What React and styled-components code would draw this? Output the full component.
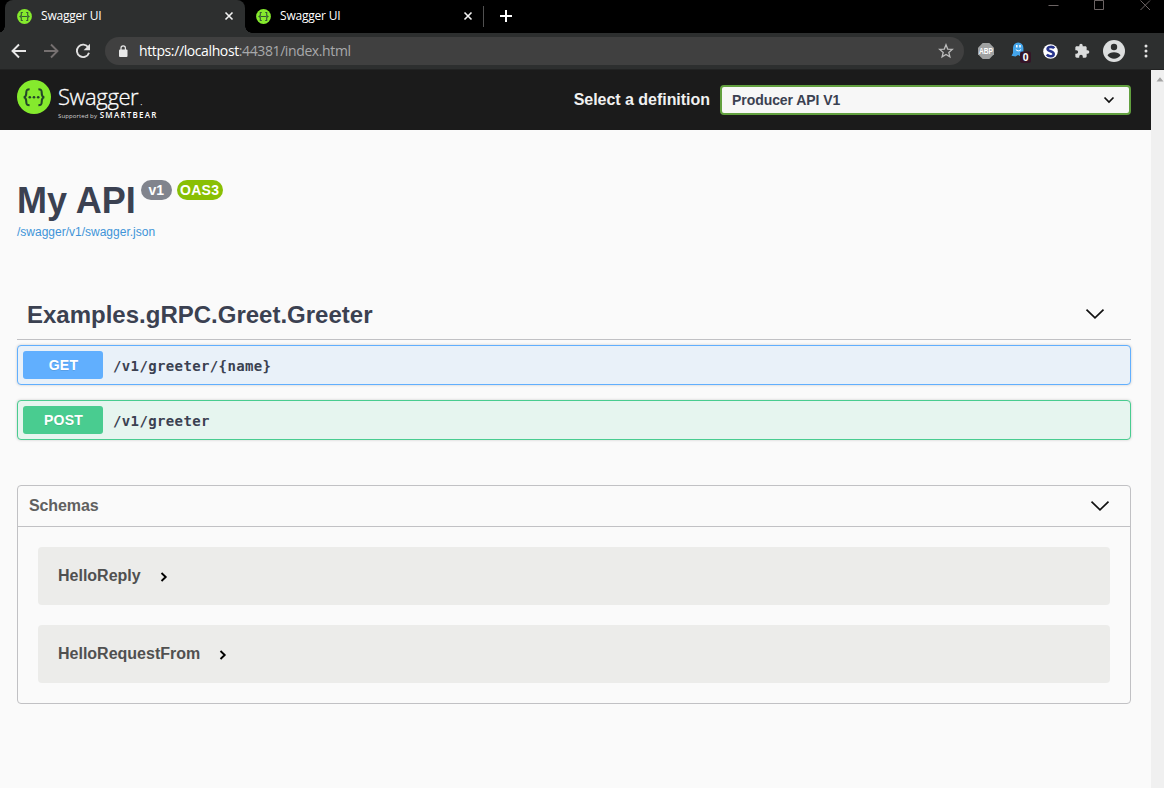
import React from "react";
import styled, { createGlobalStyle } from "styled-components";

const GlobalStyle = createGlobalStyle`
  * { box-sizing: border-box; }
  body { margin: 0; background: #fafafa; overflow: hidden; }
`;

const Window = styled.div`
  width: 1164px;
  height: 788px;
  display: flex;
  flex-direction: column;
  overflow: hidden;
  font-family: "Liberation Sans", Arial, sans-serif;
  color: #3b4151;
  svg { display: block; flex: none; }
`;

const TabStrip = styled.div`
  height: 33px;
  flex: none;
  display: flex;
  background: #000;
  padding-left: 5px;
`;

const Tab = styled.div`
  position: relative;
  width: ${(p) => p.$width}px;
  height: 33px;
  display: flex;
  align-items: center;
  padding: 0 ${(p) => (p.$active ? "11px 1px 12px" : "10px 1px 11px")};
  background: ${(p) => (p.$active ? "#2d2f2f" : "#000")};
  border-radius: 8px 8px 0 0;

  &::before,
  &::after {
    content: "";
    display: ${(p) => (p.$active ? "block" : "none")};
    position: absolute;
    bottom: 0;
    width: 7px;
    height: 7px;
  }
  &::before {
    right: 100%;
    background: radial-gradient(circle at 0 0, #000 6.500px, #2d2f2f 7px);
  }
  &::after {
    left: 100%;
    background: radial-gradient(circle at 100% 0, #000 6.500px, #2d2f2f 7px);
    z-index: 1;
  }
`;

const TabTitle = styled.span`
  flex: 1;
  margin-left: 9px;
  font: 12px/16px "Open Sans", "Noto Sans", sans-serif;
  letter-spacing: -0.2px;
  color: #fff;
`;

const TabDivider = styled.div`
  width: 1px;
  height: 21px;
  margin: 6px 15px 0 0;
  background: #505050;
`;

const NewTab = styled.div`
  padding-top: 9px;
`;

const WindowControls = styled.div`
  margin-left: auto;
  display: flex;
  gap: 35px;
  padding-right: 13px;
`;

const Toolbar = styled.div`
  height: 37px;
  flex: none;
  display: flex;
  align-items: center;
  background: #2d2f2f;
  border-bottom: 1px solid #222323;
  padding-left: 11px;
`;

const NavButtons = styled.div`
  width: 94px;
  display: flex;
  gap: 16px;
`;

const AddressBar = styled.div`
  width: 859px;
  height: 28px;
  display: flex;
  align-items: center;
  padding: 0 10px 0 12px;
  border-radius: 14px;
  background: #404040;
`;

const Url = styled.span`
  flex: 1;
  margin-left: 10px;
  font: 14px/20px "Open Sans", "Noto Sans", sans-serif;
  letter-spacing: -0.39px;
  color: #a8a9ab;
  b { font-weight: 400; color: #fff; }
`;

const Extensions = styled.div`
  display: grid;
  grid-template-columns: repeat(6, 32px);
  align-items: center;
  justify-items: center;
  padding-left: 6px;
`;

const Viewport = styled.div`
  flex: 1;
  min-height: 0;
  display: flex;
`;

const Page = styled.main`
  width: 1151px;
  background: #fafafa;
`;

const Scrollbar = styled.div`
  width: 13px;
  background: #f0f0f0;
  padding: 7px 0 0 5px;
`;

const Topbar = styled.header`
  height: 60px;
  display: flex;
  align-items: center;
  background: #1b1b1b;
  padding: 0 20px 0 17px;
`;

const Brand = styled.div`
  display: flex;
  gap: 7px;
  height: 50px;
  padding-top: 5px;
  flex: 1;
`;

const BrandText = styled.div`
  color: #fff;
  font-family: "Open Sans", sans-serif;
`;

const BrandName = styled.div`
  height: 29px;
  font-size: 22px;
  font-weight: 300;
  line-height: 26px;
  letter-spacing: -0.4px;
  padding-top: 3px;
  -webkit-text-stroke: 0.3px #fff;
  small { font-size: 9px; letter-spacing: 0; color: #999; margin-left: 2px; }
`;

const BrandNote = styled.div`
  font-size: 6px;
  line-height: 8px;
  margin-top: 2px;
  letter-spacing: 0.1px;
  white-space: nowrap;
  color: #d5d5d5;
  b { font-size: 8px; font-weight: 600; letter-spacing: 1.25px; color: #fff; margin-left: 1px; }
`;

const DefinitionLabel = styled.span`
  font-size: 16px;
  font-weight: 700;
  letter-spacing: -0.03px;
  color: #f0f0f0;
  margin-right: 10px;
`;

const DefinitionSelect = styled.div`
  width: 411px;
  height: 30px;
  display: flex;
  align-items: center;
  justify-content: space-between;
  padding: 0 14px 0 10px;
  border: 2px solid #62a03f;
  border-radius: 4px;
  background: #f7f7f7;
  font-size: 14px;
  font-weight: 700;
  letter-spacing: -0.06px;
`;

const Content = styled.div`
  padding: 49px 20px 0 17px;
`;

const TitleRow = styled.div`
  display: flex;
  height: 42px;
`;

const Title = styled.h1`
  margin: 0 5px 0 0;
  padding-top: 1px;
  font-size: 36px;
  line-height: 42px;
`;

const Badge = styled.span`
  width: ${(p) => p.$width}px;
  height: 20px;
  margin: 1px 5px 0 0;
  border-radius: 10px;
  background: ${(p) => p.$color};
  color: #fff;
  font-size: 14px;
  font-weight: 700;
  line-height: 20px;
  letter-spacing: ${(p) => p.$spacing || 0}px;
  text-align: center;
`;

const SpecLink = styled.a`
  display: block;
  margin-top: 4px;
  font-size: 12px;
  line-height: 14px;
  color: #4094d8;
`;

const TagHeader = styled.h2`
  margin: 51px 0 5px;
  height: 50px;
  display: flex;
  align-items: center;
  justify-content: space-between;
  padding: 0 26px 0 10px;
  border-bottom: 1px solid #c1c1c4;
  font-size: 24px;
  svg { margin-bottom: 2px; }
`;

const Operation = styled.div`
  height: 40px;
  display: flex;
  align-items: center;
  margin-bottom: 15px;
  padding: 0 5px;
  border: 1px solid ${(p) => p.$color};
  border-radius: 4px;
  background: ${(p) => p.$tint};
  box-shadow: 0 0 3px rgba(0, 0, 0, 0.19);
`;

const Method = styled.span`
  width: 80px;
  height: 28px;
  padding-left: 1px;
  border-radius: 3px;
  background: ${(p) => p.$color};
  color: #fff;
  font-size: 14px;
  font-weight: 700;
  line-height: 28px;
  letter-spacing: 0.25px;
  text-align: center;
  text-shadow: 0 1px 0 rgba(0, 0, 0, 0.1);
`;

const Path = styled.span`
  margin: 2px 0 0 10px;
  font: 700 14px/20px "DejaVu Sans Mono", monospace;
  letter-spacing: 0.37px;
`;

const Schemas = styled.section`
  height: 219px;
  margin-top: 45px;
  border: 1px solid #c1c1c4;
  border-radius: 4px;
`;

const SchemasHeader = styled.h4`
  margin: 0;
  height: 41px;
  display: flex;
  align-items: center;
  justify-content: space-between;
  padding: 0 20px 0 11px;
  border-bottom: 1px solid #c1c1c4;
  font-size: 16px;
  letter-spacing: -0.1px;
  color: #606060;
`;

const Models = styled.div`
  display: flex;
  flex-direction: column;
  gap: 20px;
  padding: 20px;
`;

const Model = styled.div`
  height: 58px;
  display: flex;
  align-items: center;
  gap: 19px;
  padding: 0 20px 1px;
  border-radius: 4px;
  background: #ececea;
  font-size: 16px;
  font-weight: 700;
  color: #505050;
  svg { margin-top: 3px; }
`;

const SwaggerMark = ({ size }) => (
  <svg width={size} height={size} viewBox="0 0 34 34">
    <circle cx="17" cy="17" r="17" fill="#85ea2d" />
    <g fill="none" stroke="#24452a" strokeWidth="2.1">
      <path d="M12.600 9.200c-3 0-3.300.9-3.300 3.200 0 2.800-.2 4.300-2.500 4.800 2.300.5 2.500 2 2.500 4.800 0 2.300.3 3.200 3.300 3.200" />
      <path d="M21.400 9.200c3 0 3.300.9 3.300 3.200 0 2.800.2 4.300 2.500 4.800-2.300.5-2.500 2-2.500 4.800 0 2.300-.3 3.200-3.300 3.200" />
    </g>
    <g fill="#24452a">
      <circle cx="12.800" cy="17.200" r="1.300" />
      <circle cx="17" cy="17.200" r="1.300" />
      <circle cx="21.200" cy="17.200" r="1.300" />
    </g>
  </svg>
);

const Favicon = () => (
  <svg width="15" height="15" viewBox="0 0 15 15">
    <circle cx="7.500" cy="7.500" r="7.400" fill="#85ea2d" />
    <path d="M5.800 3.500H4.300v3L3 7.500l1.300 1v3h1.500M9.200 3.500h1.500v3l1.300 1-1.300 1v3H9.200M4.500 7.500h6" fill="none" stroke="#355a35" strokeWidth="1.100" />
  </svg>
);

const CloseIcon = () => (
  <svg width="10" height="10" viewBox="0 0 10 10">
    <path d="M1.500 1.500l7 7m0-7l-7 7" stroke="#f2f2f2" strokeWidth="1.600" />
  </svg>
);

const ArrowIcon = ({ back }) => (
  <svg width="16" height="16" viewBox="0 0 16 16">
    <path
      d={back ? "M15 8H2M8 1.500L1.500 8 8 14.500" : "M1 8h13M8 1.500L14.500 8 8 14.500"}
      fill="none"
      stroke={back ? "#e8e8e8" : "#757070"}
      strokeWidth="1.900"
    />
  </svg>
);

const ReloadIcon = () => (
  <svg width="16" height="16" viewBox="0 0 16 16">
    <path d="M13.300 4.500A6.200 6.200 0 1 0 14 9.700" fill="none" stroke="#e0e0e0" strokeWidth="1.900" />
    <path d="M15 .8v6.400H8.600z" fill="#e0e0e0" />
  </svg>
);

const LockIcon = () => (
  <svg width="12" height="13" viewBox="0 0 12 13">
    <rect x="2" y="4.500" width="8.500" height="7.500" rx="1" fill="#e8e8e8" />
    <path d="M4 5.500V3.100a2.200 2.200 0 0 1 4.400 0v2.400" fill="none" stroke="#e8e8e8" strokeWidth="1.200" />
  </svg>
);

const StarIcon = () => (
  <svg width="16" height="16" viewBox="0 0 16 16">
    <path d="M8 1.800l1.700 4.300 4.600.3-3.500 3 1.100 4.500L8 11.500l-3.900 2.400 1.100-4.500-3.500-3 4.600-.3z" fill="none" stroke="#bcbcbc" strokeWidth="1.300" />
  </svg>
);

const AdblockIcon = () => (
  <svg width="20" height="16" viewBox="-2 0 20 16">
    <path d="M4.700 0h6.600L16 4.700v6.600L11.300 16H4.700L0 11.300V4.700z" fill="#a0a2a2" />
    <text x="8" y="11.200" textAnchor="middle" textLength="14" lengthAdjust="spacingAndGlyphs" fontFamily="Liberation Sans, sans-serif" fontWeight="700" fontSize="9" fill="#fff">ABP</text>
  </svg>
);

const GhostIcon = () => (
  <svg width="26" height="23" viewBox="-6 0 26 23">
    <path d="M2 8a5.200 5.500 0 0 1 10.400 0v8.200H9.500L7 15l-2.500 1.500L.5 15.800 2 13z" fill="#44a5ea" />
    <path d="M5.800 5v2.500M9 5v2.500" stroke="#fff" strokeWidth="1.500" />
    <path d="M4.800 9.500c1.400 1.800 3.800 1.800 5.200 0" fill="none" stroke="#fff" />
    <rect x="9" y="11.500" width="11" height="11.500" rx="2" fill="#351527" />
    <text x="14.500" y="21" textAnchor="middle" fontFamily="Open Sans, sans-serif" fontWeight="700" fontSize="10" fill="#fff">0</text>
  </svg>
);

const SiteIcon = () => (
  <svg width="15" height="15" viewBox="0 0 15 15">
    <circle cx="7.500" cy="7.500" r="7.300" fill="#fff" />
    <path d="M11.200 4.300C10 2.400 4.600 2.300 4.600 5s6.100 2 6.100 4.900c0 3-5.200 3-6.900.7" fill="none" stroke="#27348b" strokeWidth="2.600" />
  </svg>
);

const PuzzleIcon = () => (
  <svg width="16" height="16" viewBox="0 0 24 24">
    <path d="M20.500 11H19V7c0-1.100-.9-2-2-2h-4V3.500a2.500 2.500 0 0 0-5 0V5H4c-1.100 0-2 .9-2 2v3.800h1.500a2.700 2.700 0 0 1 0 5.400H2V20c0 1.100.9 2 2 2h3.800v-1.500a2.700 2.700 0 0 1 5.400 0V22H17c1.100 0 2-.9 2-2v-4h1.500a2.500 2.500 0 0 0 0-5z" fill="#dadcdc" />
  </svg>
);

const ProfileIcon = () => (
  <svg width="22" height="22" viewBox="0 0 22 22">
    <circle cx="11" cy="11" r="11" fill="#dcdede" />
    <circle cx="11" cy="7" r="3.200" fill="#2d2f2f" />
    <path d="M4.500 15.200c2-4 11-4 13 0-3 4.600-10 4.600-13 0z" fill="#2d2f2f" />
  </svg>
);

const DotsIcon = () => (
  <svg width="4" height="14" viewBox="0 0 4 14" fill="#e4e4e4">
    <circle cx="2" cy="2" r="1.500" />
    <circle cx="2" cy="7" r="1.500" />
    <circle cx="2" cy="12" r="1.500" />
  </svg>
);

const ChevronDown = () => (
  <svg width="20" height="12" viewBox="0 0 20 12">
    <path d="M1.500 1.700L10 9.800l8.500-8.100" fill="none" stroke="#111" strokeWidth="1.700" />
  </svg>
);

const ChevronRight = () => (
  <svg width="8" height="10" viewBox="0 0 8 10">
    <path d="M1.500 1L5.700 5 1.500 9" fill="none" stroke="#000" strokeWidth="1.900" />
  </svg>
);

const operations = [
  { method: "GET", path: "/v1/greeter/{name}", color: "#61affe", tint: "#e9f1f9" },
  { method: "POST", path: "/v1/greeter", color: "#49cc90", tint: "#e6f5ef" },
];

const models = ["HelloReply", "HelloRequestFrom"];

export default function App() {
  return (
    <Window>
      <GlobalStyle />
      <TabStrip>
        <Tab $active $width={240}>
          <Favicon />
          <TabTitle>Swagger UI</TabTitle>
          <CloseIcon />
        </Tab>
        <Tab $width={238}>
          <Favicon />
          <TabTitle>Swagger UI</TabTitle>
          <CloseIcon />
        </Tab>
        <TabDivider />
        <NewTab>
          <svg width="14" height="14" viewBox="0 0 14 14">
            <path d="M7 1v12M1 7h12" stroke="#fff" strokeWidth="2" />
          </svg>
        </NewTab>
        <WindowControls>
          <svg width="11" height="11" viewBox="0 0 11 11">
            <path d="M.5 5.500h10" stroke="#6c6464" />
          </svg>
          <svg width="11" height="11" viewBox="0 0 11 11">
            <path d="M.5.5h9v9h-9z" fill="none" stroke="#6c6464" />
          </svg>
          <svg width="11" height="11" viewBox="0 0 11 11">
            <path d="M.5.500l9.500 9.500M10 .5L.5 10" stroke="#6c6464" />
          </svg>
        </WindowControls>
      </TabStrip>
      <Toolbar>
        <NavButtons>
          <ArrowIcon back />
          <ArrowIcon />
          <ReloadIcon />
        </NavButtons>
        <AddressBar>
          <LockIcon />
          <Url>
            <b>https://localhost</b>:44381/index.html
          </Url>
          <StarIcon />
        </AddressBar>
        <Extensions>
          <AdblockIcon />
          <GhostIcon />
          <SiteIcon />
          <PuzzleIcon />
          <ProfileIcon />
          <DotsIcon />
        </Extensions>
      </Toolbar>
      <Viewport>
        <Page>
          <Topbar>
            <Brand>
              <SwaggerMark size={34} />
              <BrandText>
                <BrandName>
                  Swagger<small>.</small>
                </BrandName>
                <BrandNote>
                  Supported by <b>SMARTBEAR</b>
                </BrandNote>
              </BrandText>
            </Brand>
            <DefinitionLabel>Select a definition</DefinitionLabel>
            <DefinitionSelect>
              Producer API V1
              <svg width="12" height="8" viewBox="0 0 12 8">
                <path d="M1.500 1.500L6 6l4.500-4.500" fill="none" stroke="#111" strokeWidth="1.700" />
              </svg>
            </DefinitionSelect>
          </Topbar>
          <Content>
            <TitleRow>
              <Title>My API</Title>
              <Badge $width={31} $color="#81848d">v1</Badge>
              <Badge $width={46} $color="#89bf04" $spacing={0.3}>OAS3</Badge>
            </TitleRow>
            <SpecLink>/swagger/v1/swagger.json</SpecLink>
            <TagHeader>
              Examples.gRPC.Greet.Greeter
              <ChevronDown />
            </TagHeader>
            {operations.map((op) => (
              <Operation key={op.path} $color={op.color} $tint={op.tint}>
                <Method $color={op.color}>{op.method}</Method>
                <Path>{op.path}</Path>
              </Operation>
            ))}
            <Schemas>
              <SchemasHeader>
                Schemas
                <ChevronDown />
              </SchemasHeader>
              <Models>
                {models.map((name) => (
                  <Model key={name}>
                    {name}
                    <ChevronRight />
                  </Model>
                ))}
              </Models>
            </Schemas>
          </Content>
        </Page>
        <Scrollbar>
          <svg width="8" height="5" viewBox="0 0 8 5">
            <path d="M4 .3L7.500 4.500h-7z" fill="#a3a3a3" />
          </svg>
        </Scrollbar>
      </Viewport>
    </Window>
  );
}
